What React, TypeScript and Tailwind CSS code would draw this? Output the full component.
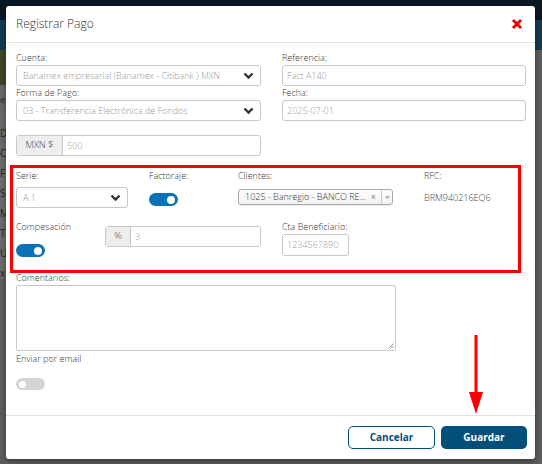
import React from "react";

const font = { fontFamily: '"Open Sans", "Liberation Sans", sans-serif' };

function Chevron() {
  return (
    <svg width="11" height="8" viewBox="0 0 11 8" className="shrink-0">
      <path d="M1.5 1.5 L5.5 5.5 L9.5 1.5" fill="none" stroke="#333" strokeWidth="2.4" />
    </svg>
  );
}

function Label({ children }: { children: React.ReactNode }) {
  return <div className="text-[9px] font-light leading-[14px] text-[#333]">{children}</div>;
}

function SelectBox({ value, className = "" }: { value: string; className?: string }) {
  return (
    <div
      className={`flex h-[21px] items-center justify-between rounded-[3px] border border-[#c8c8c8] bg-white pl-[6px] pr-[6px] ${className}`}
    >
      <span className="truncate text-[9px] font-light text-[#999]">{value}</span>
      <Chevron />
    </div>
  );
}

function TextBox({ value, className = "" }: { value: string; className?: string }) {
  return (
    <div
      className={`flex h-[21px] items-center rounded-[3px] border border-[#c8c8c8] bg-white px-[4px] text-[9px] font-light text-[#a0a0a0] ${className}`}
    >
      {value}
    </div>
  );
}

function Addon({ prefix, value, prefixWidth, className = "" }: { prefix: string; value: string; prefixWidth: string; className?: string }) {
  return (
    <div className={`flex h-[21px] rounded-[3px] border border-[#c8c8c8] bg-white ${className}`}>
      <div
        className={`flex ${prefixWidth} items-center justify-center border-r border-[#c8c8c8] bg-[#eeeeee] text-[9.5px] font-light text-[#444]`}
      >
        {prefix}
      </div>
      <div className="flex items-center px-[4px] text-[9px] font-light text-[#a0a0a0]">{value}</div>
    </div>
  );
}

function Toggle({ on }: { on: boolean }) {
  return on ? (
    <div className="flex h-[13px] w-[29px] items-center justify-end rounded-full bg-[#0a72b5] pr-[3px]">
      <div className="h-[8px] w-[8px] rounded-full bg-white" />
    </div>
  ) : (
    <div className="flex h-[12px] w-[29px] items-center rounded-full bg-[#d4d4d4] pl-[3px]">
      <div className="h-[7px] w-[7px] rounded-full bg-white" />
    </div>
  );
}

export default function App() {
  return (
    <div className="relative h-[464px] w-[542px] overflow-hidden bg-[#5d5d5d]" style={font}>
      {/* dimmed page behind the dialog */}
      <div className="flex h-full flex-col">
        <div className="h-[20px] bg-[#0a1826]" />
        <div className="h-[30px] bg-[#143a52]" />
        <div className="h-[35px] w-[10px] bg-[#3d4a22]" />
        <div className="h-[30px] w-[10px] bg-[#6a6a6a] pt-[8px] text-[9px] text-[#2a2a2a]">es</div>
        <div className="flex w-[10px] flex-col gap-[8px] bg-[#6c6c6c] pt-[12px] text-[10px] leading-[12px] text-[#222]">
          <span>D</span>
          <span>C</span>
          <span>F</span>
          <span>S</span>
          <span>M</span>
          <span>T</span>
          <span>U</span>
          <span>xi</span>
        </div>
      </div>

      <div className="absolute left-[6px] top-[6px] flex h-[453px] w-[529px] flex-col rounded-[3px] bg-white shadow-[0_2px_6px_rgba(0,0,0,0.4)]">
        <div className="flex h-[37px] items-center justify-between border-b border-[#e3e3e3] pl-[10px] pr-[12px]">
          <span className="text-[12px] font-light text-[#333]">Registrar Pago</span>
          <svg width="12" height="12" viewBox="0 0 12 12">
            <path d="M2 2 L10 10 M10 2 L2 10" stroke="#f00000" strokeWidth="3" />
          </svg>
        </div>

        <div className="relative flex-1 px-[10px] pt-[8px]">
          <div className="grid grid-cols-[245px_244px] gap-x-[21px]">
            <div>
              <Label>Cuenta:</Label>
              <SelectBox value="Banamex empresarial (Banamex - Citibank ) MXN" />
            </div>
            <div>
              <Label>Referencia:</Label>
              <TextBox value="Fact A140" />
            </div>
            <div>
              <Label>Forma de Pago:</Label>
              <SelectBox value="03 - Transferencia Electrónica de Fondos" />
            </div>
            <div>
              <Label>Fecha:</Label>
              <TextBox value="2025-07-01" />
            </div>
          </div>

          <Addon prefix="MXN $" value="500" prefixWidth="w-[46px]" className="mt-[14px] w-[245px]" />

          <div className="ml-[-6px] mt-[9px] h-[108px] w-[511px] border-[3px] border-[#ff0000] pl-[3px] pt-[1px]">
            <div className="flex">
              <div className="w-[133px]">
                <Label>Serie:</Label>
                <SelectBox value="A 1" className="mt-[4px] w-[112px]" />
              </div>
              <div className="w-[89px]">
                <Label>Factoraje:</Label>
                <div className="mt-[10px]">
                  <Toggle on />
                </div>
              </div>
              <div className="w-[186px]">
                <Label>Clientes:</Label>
                <div className="mt-[6px] flex h-[16px] w-[155px] items-center rounded-[3px] border border-[#aaaaaa] bg-gradient-to-b from-white to-[#f2f2f2] pl-[6px] shadow-[0_1px_1px_rgba(0,0,0,0.08)]">
                  <span className="flex-1 whitespace-nowrap text-[9px] font-light text-[#333]">1025 - Banregio - BANCO RE...</span>
                  <span className="pr-[5px] text-[9px] font-bold text-[#999]">×</span>
                  <div className="flex h-full w-[11px] items-center justify-center border-l border-[#cccccc]">
                    <svg width="5" height="3" viewBox="0 0 5 3">
                      <path d="M0 0 L5 0 L2.5 3 Z" fill="#aaa" />
                    </svg>
                  </div>
                </div>
              </div>
              <div>
                <Label>RFC:</Label>
                <div className="mt-[8px] text-[9px] font-light text-[#444]">BRM940216EQ6</div>
              </div>
            </div>

            <div className="mt-[12px] flex">
              <div className="w-[89px]">
                <Label>Compesación</Label>
                <div className="mt-[10px]">
                  <Toggle on />
                </div>
              </div>
              <Addon prefix="%" value="3" prefixWidth="w-[25px]" className="mt-[6px] w-[156px]" />
              <div className="ml-[21px]">
                <Label>Cta Beneficiario:</Label>
                <TextBox value="1234567890" className="h-[22px] w-[67px]" />
              </div>
            </div>
          </div>

          <div className="-mt-[2px]">
            <Label>Comentarios:</Label>
          </div>
          <div className="relative h-[66px] w-[380px] rounded-[2px] border border-[#c8c8c8]">
            <svg width="6" height="6" viewBox="0 0 6 6" className="absolute bottom-[1px] right-[1px]">
              <path d="M0.5 5.5 L5.5 0.5 M3 5.5 L5.5 3" stroke="#777" strokeWidth="0.8" />
            </svg>
          </div>
          <div className="mt-[1px]">
            <Label>Enviar por email</Label>
          </div>
          <div className="mt-[12px]">
            <Toggle on={false} />
          </div>

          {/* red arrow annotation */}
          <svg width="16" height="80" viewBox="0 0 16 80" className="absolute left-[462px] top-[292px]">
            <path d="M8 0 L8 60" stroke="#ff0000" strokeWidth="3" />
            <path d="M1 57 L15 57 L8 79 Z" fill="#ff0000" />
          </svg>
        </div>

        <div className="flex h-[44px] items-center justify-end gap-[6px] border-t border-[#e3e3e3] pr-[8px]">
          <button className="h-[23px] w-[87px] rounded-[5px] border border-[#02507a] bg-white text-[10px] font-bold text-[#02507a]">
            Cancelar
          </button>
          <button className="h-[23px] w-[86px] rounded-[5px] bg-[#02507a] text-[10px] font-bold text-white">
            Guardar
          </button>
        </div>
      </div>
    </div>
  );
}
